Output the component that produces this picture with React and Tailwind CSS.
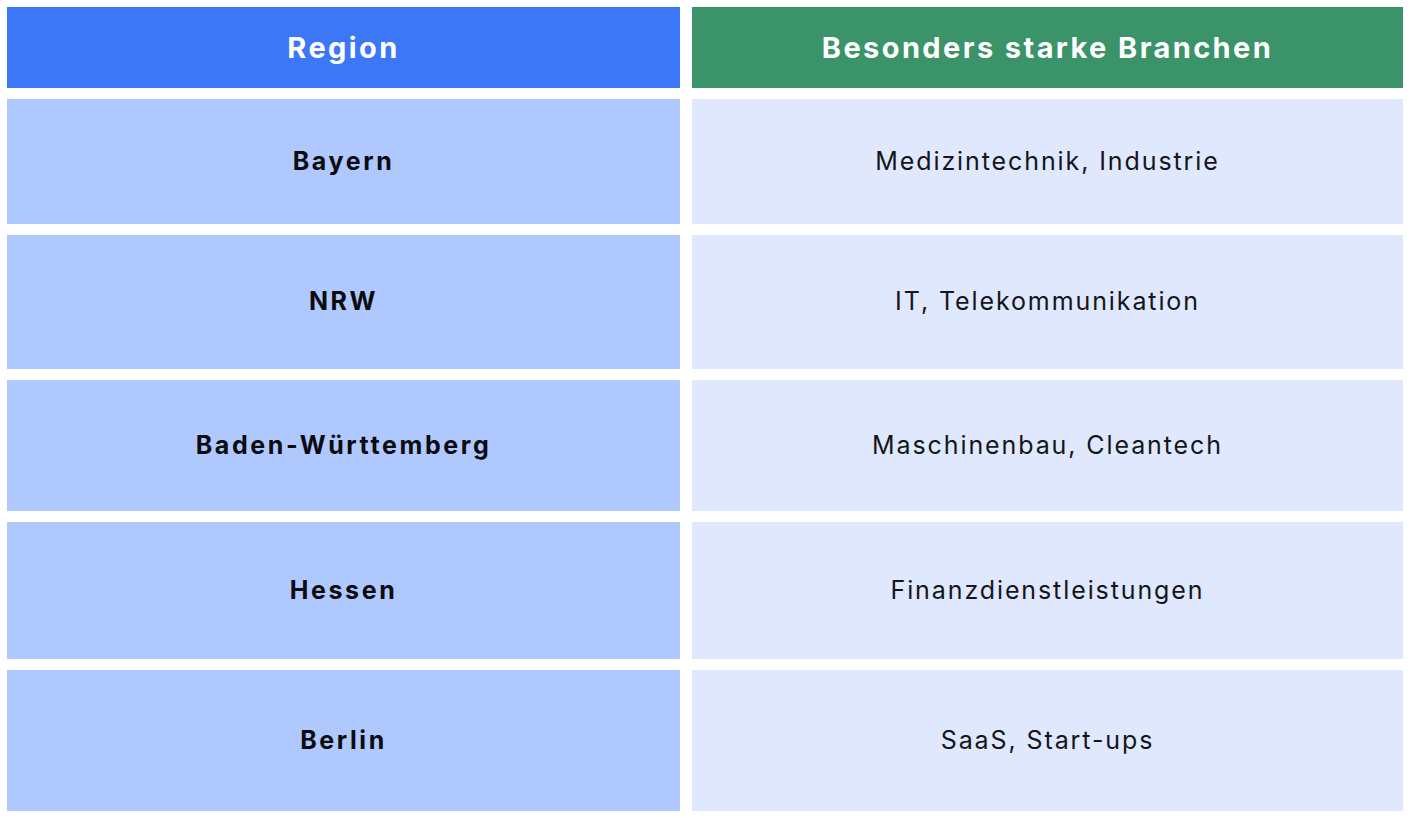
import React from "react";

const rows = [
  { region: "Bayern", branchen: "Medizintechnik, Industrie" },
  { region: "NRW", branchen: "IT, Telekommunikation" },
  { region: "Baden-Württemberg", branchen: "Maschinenbau, Cleantech" },
  { region: "Hessen", branchen: "Finanzdienstleistungen" },
  { region: "Berlin", branchen: "SaaS, Start-ups" },
];

const App = () => {
  return (
    <div className="w-[1412px] h-[818px] bg-white p-[7px] font-['Inter',sans-serif]">
      <div className="grid h-full grid-cols-[673px_711px] grid-rows-[81px_125px_134px_131px_137px_141px] gap-x-[12px] gap-y-[11px]">
        <div className="flex items-center justify-center bg-[#3b77f6] text-[29px] font-bold tracking-[2.4px] text-white">
          Region
        </div>
        <div className="flex items-center justify-center bg-[#3a9369] text-[29px] font-bold tracking-[2.4px] text-white">
          Besonders starke Branchen
        </div>
        {rows.map((row) => (
          <React.Fragment key={row.region}>
            <div className="flex items-center justify-center bg-[#afc8fd] text-[25px] font-bold tracking-[2.6px] text-[#0b0b10]">
              {row.region}
            </div>
            <div className="flex items-center justify-center bg-[#dfe8fc] text-[25px] tracking-[1.9px] text-[#15151b]">
              {row.branchen}
            </div>
          </React.Fragment>
        ))}
      </div>
    </div>
  );
};

export default App;
